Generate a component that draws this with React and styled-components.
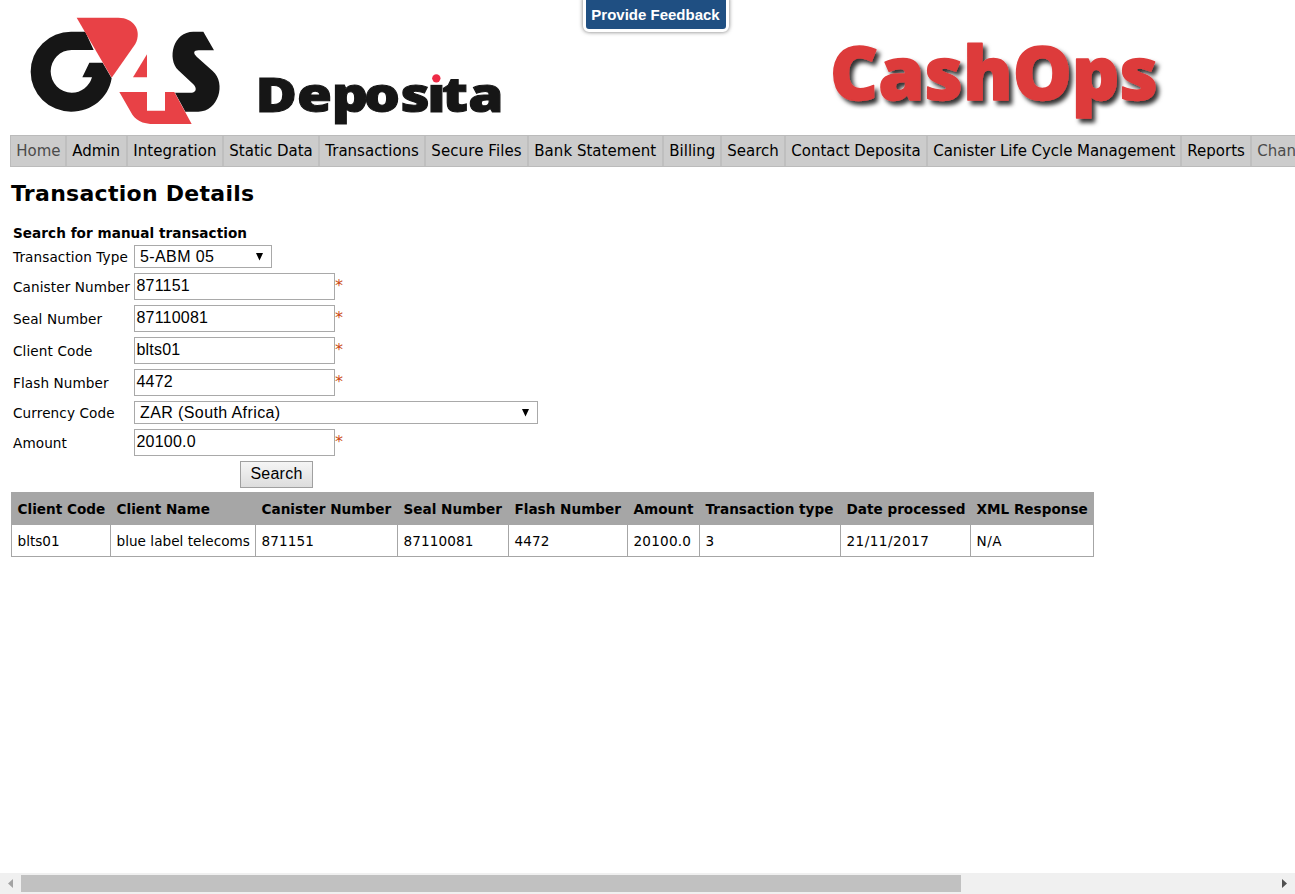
import React from "react";
import styled, { createGlobalStyle } from "styled-components";

const GlobalStyle = createGlobalStyle`
  * { box-sizing: border-box; }
  body {
    margin: 0;
    overflow: hidden;
    background: #fff;
    color: #000;
    font-family: Verdana, "DejaVu Sans", sans-serif;
  }
`;

const Page = styled.div`
  height: 894px;
  display: flex;
  flex-direction: column;
  overflow: hidden;
`;

const Header = styled.header`
  position: relative;
  flex: none;
  height: 135px;
  padding-left: 10px;
  display: flex;
  justify-content: space-between;
  padding-right: 125px;
`;

const Logo = styled.svg`
  display: block;
  flex: none;
  overflow: visible;
`;

const Feedback = styled.button`
  position: absolute;
  top: -3px;
  left: 583px;
  width: 146px;
  height: 35px;
  padding: 0 1px 1px 0;
  border: 3px solid #fff;
  border-radius: 0 0 6px 6px;
  background: #1f4f82;
  box-shadow: 0 0 4px rgba(0, 0, 0, 0.55);
  color: #fff;
  font: bold 15px "Liberation Sans", Arial, sans-serif;
  white-space: nowrap;
`;

const Nav = styled.nav`
  flex: none;
  display: flex;
  width: 1400px;
  height: 32px;
  margin-left: 10px;
  border: 1px solid #bbb;
  border-right: 0;
  background: #ccc;
`;

const NavItem = styled.a`
  flex: none;
  width: ${(p) => p.$width}px;
  padding-left: 5.3px;
  border-right: 2px solid #bfbfbf;
  color: ${(p) => (p.$muted ? "#4b4b4b" : "#000")};
  font-size: 15px;
  line-height: 30px;
  letter-spacing: ${(p) => p.$track || 0}px;
  white-space: nowrap;
`;

const Main = styled.main`
  flex: 1;
  padding: 13px 0 0 11px;
`;

const Title = styled.h1`
  margin: 0;
  font-size: 22px;
  line-height: 28px;
  letter-spacing: 0.28px;
`;

const Form = styled.form`
  display: flex;
  flex-direction: column;
  margin: 16px 0 4px 2px;
`;

const FormTitle = styled.div`
  height: 21px;
  font-size: 13.6px;
  font-weight: bold;
  line-height: 18px;
  letter-spacing: 0.04px;
`;

const Field = styled.div`
  display: flex;
  height: ${(p) => p.$height}px;
  margin-bottom: 5px;
`;

const Label = styled.label`
  flex: none;
  width: 121px;
  font-size: 13.6px;
  line-height: ${(p) => p.$line}px;
  letter-spacing: 0.1px;
  white-space: nowrap;
`;

const Input = styled.div`
  width: 201px;
  height: 27px;
  padding-left: 1.5px;
  border: 1px solid #a9a9a9;
  font: 16px/24px "Liberation Sans", Arial, sans-serif;
  letter-spacing: 0.2px;
`;

const Select = styled.div`
  display: flex;
  align-items: center;
  justify-content: space-between;
  width: ${(p) => p.$width}px;
  height: 23px;
  padding: 0 8px 0 5px;
  border: 1px solid #a9a9a9;
  font: 16px/21px "Liberation Sans", Arial, sans-serif;
  letter-spacing: 0.4px;
`;

const Required = styled.span`
  color: #cc4a14;
  font-size: 16px;
  line-height: 25px;
`;

const SearchButton = styled.button`
  align-self: flex-start;
  width: 73px;
  height: 27px;
  margin-left: 227px;
  padding: 0 0 2px;
  border: 1px solid #a0a0a0;
  border-radius: 0;
  background: linear-gradient(#f5f5f5, #dddddd);
  color: #000;
  font: 16px "Liberation Sans", Arial, sans-serif;
  letter-spacing: 0.25px;
`;

const Results = styled.table`
  width: 1082px;
  table-layout: fixed;
  border-collapse: collapse;
  font-size: 13.6px;
`;

const HeadCell = styled.th`
  height: 32px;
  padding: 1px 0 0 5.5px;
  border: 1px solid #a6a6a6;
  background: #a6a6a6;
  text-align: left;
  white-space: nowrap;
`;

const Cell = styled.td`
  height: 32px;
  padding: 1px 0 0 5.5px;
  border: 1px solid #a6a6a6;
  letter-spacing: ${(p) => p.$track || 0}px;
  white-space: nowrap;
`;

const ScrollBar = styled.div`
  flex: none;
  display: flex;
  align-items: center;
  justify-content: space-between;
  height: 21px;
  background: #f0f0f0;
`;

const Thumb = styled.div`
  width: 940px;
  height: 17px;
  margin-right: auto;
  background: #c1c1c1;
`;

const ScrollArrow = styled.svg`
  flex: none;
  width: 21px;
  height: 21px;
`;

const navItems = [
  { text: "Home", width: 56, muted: true },
  { text: "Admin", width: 61 },
  { text: "Integration", width: 96, track: 0.05 },
  { text: "Static Data", width: 96 },
  { text: "Transactions", width: 106 },
  { text: "Secure Files", width: 103, track: 0.1 },
  { text: "Bank Statement", width: 135, track: 0.03 },
  { text: "Billing", width: 58 },
  { text: "Search", width: 64 },
  { text: "Contact Deposita", width: 142, track: -0.02 },
  { text: "Canister Life Cycle Management", width: 254, track: -0.05 },
  { text: "Reports", width: 70 },
  { text: "Chan", width: 149, muted: true },
];

const fields = [
  { label: "Transaction Type", value: "5-ABM 05", select: 138 },
  { label: "Canister Number", value: "871151" },
  { label: "Seal Number", value: "87110081" },
  { label: "Client Code", value: "blts01" },
  { label: "Flash Number", value: "4472" },
  { label: "Currency Code", value: "ZAR (South Africa)", select: 404 },
  { label: "Amount", value: "20100.0" },
];

const columns = [
  { head: "Client Code", value: "blts01", width: 99 },
  { head: "Client Name", value: "blue label telecoms", width: 145, track: 0.03 },
  { head: "Canister Number", value: "871151", width: 142, track: 0.1 },
  { head: "Seal Number", value: "87110081", width: 111, track: 0.1 },
  { head: "Flash Number", value: "4472", width: 119, track: 0.1 },
  { head: "Amount", value: "20100.0", width: 72, track: 0.2 },
  { head: "Transaction type", value: "3", width: 141 },
  { head: "Date processed", value: "21/11/2017", width: 130, track: 0.45 },
  { head: "XML Response", value: "N/A", width: 123, track: 0.5 },
];

function DepositaLogo() {
  return (
    <Logo width="500" height="135" viewBox="0 0 1500 405">
      <g fill="#161616">
        <path d="M226 95H183A121 120 0 0 0 183 335C245 335 295 295 305 235L278 188H238L217 232H246A63 64 0 0 1 185 278A63 64 0 0 1 185 150H251Z" />
        <path d="M580 95L612 151H566C550 151 549 160 560 170L608 213C650 250 625 335 565 335H526L495 278H545C558 278 562 265 550 253L505 211C470 175 490 95 550 95Z" />
      </g>
      <g fill="#e84146">
        <path d="M200 53H325C370 53 397 90 376 132L305 233Z" />
        <path d="M411 163V232H369Z" />
        <path d="M328 276H411V332H465V276H493L545 372H435C395 372 375 360 362 335Z" />
      </g>
      <text
        transform="scale(1.18 1)"
        x="624 730 818 900 993 1061 1098 1165"
        y="335"
        fill="#161616"
        stroke="#161616"
        strokeWidth="3"
        fontFamily="Open Sans, sans-serif"
        fontWeight="800"
        fontSize="144"
      >
        Deposita
      </text>
      <rect x="1255" y="206" width="48" height="48" fill="#fff" />
      <circle cx="1279" cy="235" r="12.5" fill="#ee2a45" />
    </Logo>
  );
}

function CashOpsLogo() {
  return (
    <Logo width="350" height="135" viewBox="0 0 350 135">
      <defs>
        <filter id="shade" x="-10%" y="-10%" width="120%" height="130%">
          <feDropShadow dx="3.5" dy="4" stdDeviation="2" floodColor="#000" floodOpacity="0.8" />
        </filter>
      </defs>
      <text
        x="10"
        y="100"
        textLength="328"
        lengthAdjust="spacingAndGlyphs"
        fill="#dd3b3b"
        stroke="#dd3b3b"
        strokeWidth="1.5"
        strokeLinejoin="round"
        filter="url(#shade)"
        fontFamily="Open Sans, sans-serif"
        fontWeight="800"
        fontSize="75"
      >
        CashOps
      </text>
    </Logo>
  );
}

function DropArrow() {
  return (
    <svg width="7" height="8" viewBox="0 0 7 8">
      <path d="M0 0H7L3.5 7.5Z" />
    </svg>
  );
}

export default function App() {
  return (
    <Page>
      <GlobalStyle />
      <Header>
        <DepositaLogo />
        <CashOpsLogo />
        <Feedback>Provide Feedback</Feedback>
      </Header>
      <Nav>
        {navItems.map((n) => (
          <NavItem key={n.text} $width={n.width} $muted={n.muted} $track={n.track}>
            {n.text}
          </NavItem>
        ))}
      </Nav>
      <Main>
        <Title>Transaction Details</Title>
        <Form>
          <FormTitle>Search for manual transaction</FormTitle>
          {fields.map((f) => (
            <Field key={f.label} $height={f.select ? 23 : 27}>
              <Label $line={f.select ? 24 : 28}>{f.label}</Label>
              {f.select ? (
                <Select $width={f.select}>
                  {f.value}
                  <DropArrow />
                </Select>
              ) : (
                <>
                  <Input>{f.value}</Input>
                  <Required>*</Required>
                </>
              )}
            </Field>
          ))}
          <SearchButton type="button">Search</SearchButton>
        </Form>
        <Results>
          <colgroup>
            {columns.map((c) => (
              <col key={c.head} width={c.width} />
            ))}
          </colgroup>
          <thead>
            <tr>
              {columns.map((c) => (
                <HeadCell key={c.head}>{c.head}</HeadCell>
              ))}
            </tr>
          </thead>
          <tbody>
            <tr>
              {columns.map((c) => (
                <Cell key={c.head} $track={c.track}>{c.value}</Cell>
              ))}
            </tr>
          </tbody>
        </Results>
      </Main>
      <ScrollBar>
        <ScrollArrow viewBox="0 0 21 21">
          <path d="M8 10.5L13 6V15Z" fill="#a3a3a3" />
        </ScrollArrow>
        <Thumb />
        <ScrollArrow viewBox="0 0 21 21">
          <path d="M13 10.5L8 6V15Z" fill="#505050" />
        </ScrollArrow>
      </ScrollBar>
    </Page>
  );
}
